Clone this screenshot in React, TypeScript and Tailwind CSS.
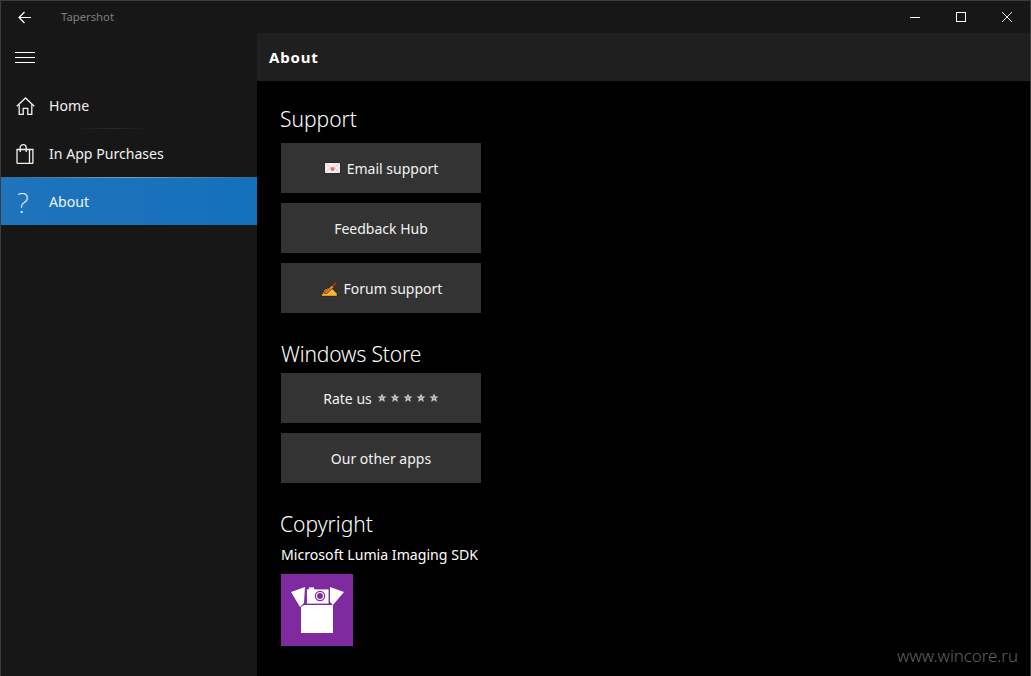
const font = "font-['Noto_Sans','Open_Sans',sans-serif]";

function ActionButton({ children }: { children: React.ReactNode }) {
  return (
    <div className="flex h-[50px] w-[200px] items-center justify-center bg-[#333333] text-[14px] text-[#f2f2f2]">
      {children}
    </div>
  );
}

function EnvelopeIcon() {
  return (
    <svg width="17" height="12" viewBox="0 0 17 12" className="mr-[6px]">
      <rect x="0.5" y="0.5" width="16" height="11" fill="#f3eeee" stroke="#2a2a2a" />
      <path d="M1 1l7.5 6L16 1M1 11l5-5M16 11l-5-5" fill="none" stroke="#cfc4c4" strokeWidth="0.8" />
      <circle cx="8.5" cy="7" r="2" fill="#e8705f" />
    </svg>
  );
}

function PencilIcon() {
  return (
    <svg width="18" height="17" viewBox="0 0 18 17" className="mr-[6px]">
      <path d="M0.7 16.3L4.5 9.5l6-3 6.8 7.2v2.6z" fill="#f8b63a" stroke="#2e2008" />
      <path d="M3.5 13l8.5-8 2.2 2.2-7.8 6.5z" fill="#e8752a" stroke="#3a2a10" strokeWidth="0.7" />
      <path d="M12 5l3-3.5 1.8 1.8-2.6 3.9z" fill="#8a3a30" stroke="#2e2008" strokeWidth="0.5" />
    </svg>
  );
}

function Star() {
  return (
    <svg width="10" height="10" viewBox="0 0 10 10">
      <path d="M5 0.5l1.3 3h3.2L7 5.6l.9 3.4L5 7.1 2.1 9 3 5.6 0.5 3.5h3.2z" fill="#c9c9c9" />
      <circle cx="5" cy="5" r="1" fill="#8d8d8d" />
    </svg>
  );
}

function HomeIcon() {
  return (
    <svg width="19" height="18" viewBox="0 0 19 18" fill="none" stroke="#f2f2f2" strokeWidth="1.3" className="ml-[15px]">
      <path d="M0.8 9.3L9.5 1l8.7 8.3" />
      <path d="M3.2 7.5v9.8h4v-6h4.6v6h4V7.5" />
    </svg>
  );
}

function BagIcon() {
  return (
    <svg width="18" height="20" viewBox="0 0 18 20" fill="none" stroke="#f2f2f2" strokeWidth="1.3" className="ml-[15px]">
      <path d="M1 5.5h12.5v13.8H1.6a.6.6 0 0 1-.6-.6z" />
      <path d="M13.5 5.5h3.4v13.2a.6.6 0 0 1-.6.6h-2.8" />
      <path d="M4.2 8V3.6C4.2 1.8 5.6.7 7.2.7s3 1.1 3 2.9V8" />
    </svg>
  );
}

function LumiaLogo() {
  const purple = "#7f2a9e";
  return (
    <svg width="72" height="72" viewBox="0 0 72 72" className="block">
      <rect width="72" height="72" fill={purple} />
      <path d="M10 18l14-5-1 16-4 4z" fill="#fff" />
      <path d="M63 18l-14-5 0 15 3 3z" fill="#fff" />
      <path d="M20 33l3-2h25l4 0v28H20z" fill="#fff" />
      <path d="M25.5 15h2v-2h6v2h14.5v15H25.5z" fill="#fff" stroke={purple} strokeWidth="0.8" />
      <circle cx="39" cy="22" r="5.2" fill={purple} />
      <circle cx="39" cy="22" r="4" fill="#fff" />
      <circle cx="39" cy="22" r="2.9" fill={purple} />
    </svg>
  );
}

function WindowButton({ children }: { children: React.ReactNode }) {
  return <div className="flex h-[32px] w-[46px] items-center justify-center">{children}</div>;
}

export default function App() {
  return (
    <div className={`${font} flex h-[676px] w-[1031px] flex-col overflow-hidden border border-b-0 border-[#3c3c3c] bg-[#171717] text-white`}>
      {/* Title bar */}
      <div className="flex h-[32px] shrink-0 items-center">
        <svg width="14" height="13" viewBox="0 0 14 13" fill="none" stroke="#fff" strokeWidth="1.2" className="ml-[17px]">
          <path d="M13 6.5H1.2M6.5 1L1 6.5 6.5 12" />
        </svg>
        <span className="ml-[29px] text-[11.3px] text-[#7d7d7d]">Tapershot</span>
        <div className="flex-1" />
        <WindowButton>
          <svg width="10" height="10" viewBox="0 0 10 10" stroke="#fff">
            <path d="M0 5.5h10" />
          </svg>
        </WindowButton>
        <WindowButton>
          <svg width="10" height="10" viewBox="0 0 10 10" fill="none" stroke="#fff">
            <rect x="0.5" y="0.5" width="9" height="9" />
          </svg>
        </WindowButton>
        <WindowButton>
          <svg width="10" height="10" viewBox="0 0 10 10" stroke="#fff" strokeWidth="0.9">
            <path d="M0 0l10 10M10 0L0 10" />
          </svg>
        </WindowButton>
      </div>

      <div className="flex min-h-0 flex-1">
        {/* Sidebar */}
        <aside className="w-[256px] shrink-0">
          <div className="flex h-[48px] items-center pl-[14px]">
            <div className="flex w-[20px] flex-col gap-[4px]">
              <div className="h-px bg-white" />
              <div className="h-px bg-white" />
              <div className="h-px bg-white" />
            </div>
          </div>
          <div className="relative flex h-[48px] items-center pt-[2px] text-[14.1px] text-[#f2f2f2]">
            <HomeIcon />
            <span className="ml-[14px]">Home</span>
            <div className="absolute bottom-0 left-[70px] h-px w-[80px] bg-gradient-to-r from-transparent via-[#2a2a2a] to-transparent" />
          </div>
          <div className="flex h-[48px] items-center pt-[2px] text-[14.1px] text-[#f2f2f2]">
            <BagIcon />
            <span className="ml-[15px]">In App Purchases</span>
          </div>
          <div className="relative flex h-[48px] items-center bg-gradient-to-r from-[#1f74bb] to-[#1470bb] pt-[2px] text-[14.1px] text-[#f2f2f2]">
            <div className="absolute left-0 top-0 h-px w-full bg-gradient-to-r from-[#2a6a9e] via-[#7d9db5] to-[#2a6a9e]" />
            <span className="ml-[16px] w-[18px] text-[28px] font-extralight leading-none">?</span>
            <span className="ml-[14px]">About</span>
          </div>
        </aside>

        {/* Main */}
        <main className="relative flex min-w-0 flex-1 flex-col bg-black">
          <div className="flex h-[48px] shrink-0 items-center bg-[#1f1f1f] pl-[12px] text-[15px] font-bold tracking-[0.8px]">
            About
          </div>
          <div className="flex flex-col pl-[24px]">
            <h2 className="ml-[-1px] mt-[23px] h-[39px] text-[21px] font-light leading-[30px]">Support</h2>
            <div className="flex flex-col gap-[10px]">
              <ActionButton>
                <EnvelopeIcon />
                Email support
              </ActionButton>
              <ActionButton>Feedback Hub</ActionButton>
              <ActionButton>
                <PencilIcon />
                Forum support
              </ActionButton>
            </div>
            <h2 className="mt-[26px] h-[34px] text-[21px] font-light leading-[30px] tracking-[-0.15px]">Windows Store</h2>
            <div className="flex flex-col gap-[10px]">
              <ActionButton>
                Rate us
                <span className="ml-[5px] flex gap-[3px]">
                  <Star />
                  <Star />
                  <Star />
                  <Star />
                  <Star />
                </span>
              </ActionButton>
              <ActionButton>Our other apps</ActionButton>
            </div>
            <h2 className="ml-[-1px] mt-[26px] h-[31px] text-[21px] font-light leading-[30px]">Copyright</h2>
            <p className="h-[34px] pt-[5px] text-[14.14px] leading-[20px]">Microsoft Lumia Imaging SDK</p>
            <LumiaLogo />
          </div>
          <span className="absolute bottom-[8px] right-[12px] text-[16.8px] font-light text-[#626262]">www.wincore.ru</span>
        </main>
      </div>
    </div>
  );
}
